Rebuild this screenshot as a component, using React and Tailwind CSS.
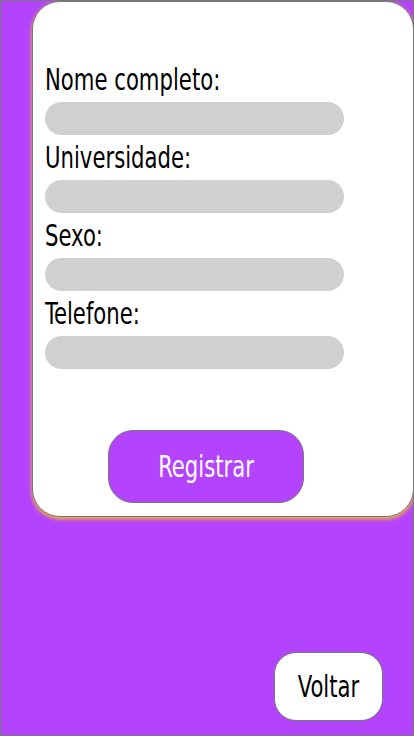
export default function App() {
  const fields = ["Nome completo:", "Universidade:", "Sexo:", "Telefone:"];
  const font = { fontFamily: '"DejaVu Sans Condensed", "DejaVu Sans", sans-serif' };
  return (
    <div className="w-[414px] h-[736px] border border-[#777] bg-[#b443fd] flex flex-col overflow-hidden" style={font}>
      <div className="ml-[31px] w-[382px] h-[516px] bg-white rounded-[28px] border border-[#777] shadow-[0_2px_4px_rgba(245,195,30,1)] flex flex-col pl-[12px] pt-[55px]">
        {fields.map((f) => (
          <div key={f} className="flex flex-col">
            <div className="h-[45px] text-[31px] leading-[44px] text-black whitespace-nowrap">
              <span className="inline-block origin-left scale-x-[0.76]">{f}</span>
            </div>
            <div className="w-[299px] h-[33px] rounded-full bg-[#d0d0d0]"></div>
          </div>
        ))}
        <div className="mt-[61px] ml-[63px] w-[196px] h-[73px] rounded-[25px] border border-[#777] bg-[#b443fd] flex items-center justify-center text-white text-[31px]">
          <span className="inline-block scale-x-[0.76]">Registrar</span>
        </div>
      </div>
      <div className="mt-[135px] ml-[273px] w-[109px] h-[69px] rounded-[22px] border border-[#777] bg-white flex items-center justify-center text-black text-[31px]">
        <span className="inline-block scale-x-[0.76]">Voltar</span>
      </div>
    </div>
  );
}
